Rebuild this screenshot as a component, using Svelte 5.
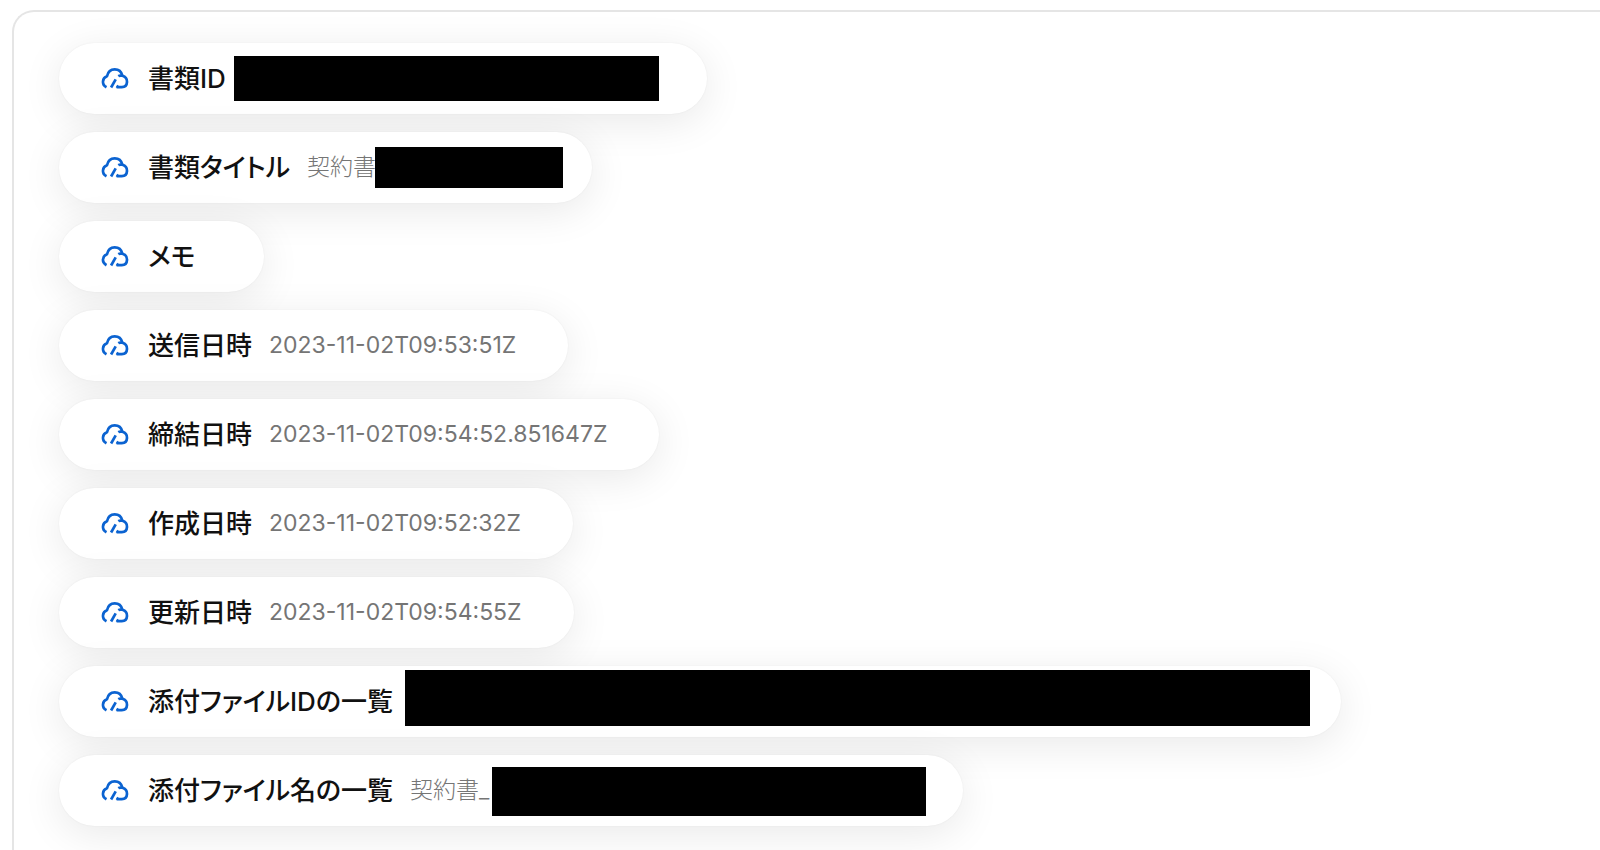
<script lang="ts">
	interface Bar {
		x: number;
		y: number;
		w: number;
		h: number;
	}

	interface Field {
		label: string;
		value?: string;
		width?: number;
		bar?: Bar;
	}

	// width = reserved value width, bar = mask over the value (relative to its box)
	const fields: Field[] = [
		{ label: '書類ID', width: 412, bar: { x: -9, y: 13, w: 425, h: 45 } },
		{ label: '書類タイトル', value: '契約書', width: 233, bar: { x: 68, y: 15, w: 188, h: 41 } },
		{ label: 'メモ' },
		{ label: '送信日時', value: '2023-11-02T09:53:51Z' },
		{ label: '締結日時', value: '2023-11-02T09:54:52.851647Z' },
		{ label: '作成日時', value: '2023-11-02T09:52:32Z' },
		{ label: '更新日時', value: '2023-11-02T09:54:55Z' },
		{ label: '添付ファイルIDの一覧', width: 879, bar: { x: -5, y: 4, w: 905, h: 56 } },
		{ label: '添付ファイル名の一覧', value: '契約書_', width: 501, bar: { x: 82, y: 12, w: 434, h: 49 } },
	];
</script>

<main class="panel">
	<dl class="fields">
		{#each fields as field}
			<div class="pill">
				<dt>
					<svg class="icon" viewBox="0 0 28 24" aria-hidden="true">
						<path d="M5.5 20.2C2.9 18.8 1.7 16.8 2 14.3C2.2 11.8 3.7 10 6 9.2C6.9 5.1 9.9 2.4 13.7 2.4C17.5 2.4 20.5 5 21.4 8.8" />
						<path d="M17.3 9.2C18.4 8.5 20 8.4 21.4 8.8C24.4 9.6 26.1 11.8 26 14.9C25.9 18.1 23.9 20.1 20.8 20.1H15.6" />
						<path d="M15.4 20.6L17 18.2" stroke-width="1.6" />
						<path d="M14.7 12.3L10.1 20.5" />
					</svg>
					{field.label}
				</dt>
				<dd class:light={field.bar} style:min-width={field.width ? `${field.width}px` : null}>
					{field.value ?? ''}
					{#if field.bar}
						<span
							class="bar"
							style:left="{field.bar.x}px"
							style:top="{field.bar.y}px"
							style:width="{field.bar.w}px"
							style:height="{field.bar.h}px"
						></span>
					{/if}
				</dd>
			</div>
		{/each}
	</dl>
</main>

<style>
	:global(body) {
		background: #fff;
		overflow: hidden;
	}

	.panel {
		box-sizing: border-box;
		min-height: 100vh;
		margin: 10px 0 0 12px;
		padding: 31px 45px;
		border: 2px solid #e5e5e5;
		border-right: 0;
		border-bottom: 0;
		border-radius: 22px 0 0 0;
		font-family: Inter, 'Noto Sans CJK JP', sans-serif;
		font-feature-settings: 'palt';
	}

	.fields {
		display: flex;
		flex-direction: column;
		align-items: flex-start;
		gap: 18px;
		margin: 0;
	}

	.pill {
		box-sizing: border-box;
		display: flex;
		gap: 17px;
		height: 71px;
		padding: 0 52px 0 42px;
		border-radius: 36px;
		background: #fff;
		box-shadow:
			0 0 2px rgba(0, 0, 0, 0.06),
			0 8px 42px rgba(0, 0, 0, 0.09);
		line-height: 71px;
		white-space: nowrap;
	}

	dt {
		display: flex;
		align-items: center;
		gap: 19px;
		color: #111;
		font-size: 26px;
		font-weight: 500;
	}

	.icon {
		width: 28px;
		height: 24px;
		fill: none;
		stroke: #0b63d1;
		stroke-width: 2.7;
		stroke-linejoin: round;
	}

	dd {
		position: relative;
		margin: 0;
		color: #757575;
		font-size: 23px;
		font-weight: 400;
	}

	.light {
		font-weight: 300;
	}

	.bar {
		position: absolute;
		background: #000;
	}
</style>
